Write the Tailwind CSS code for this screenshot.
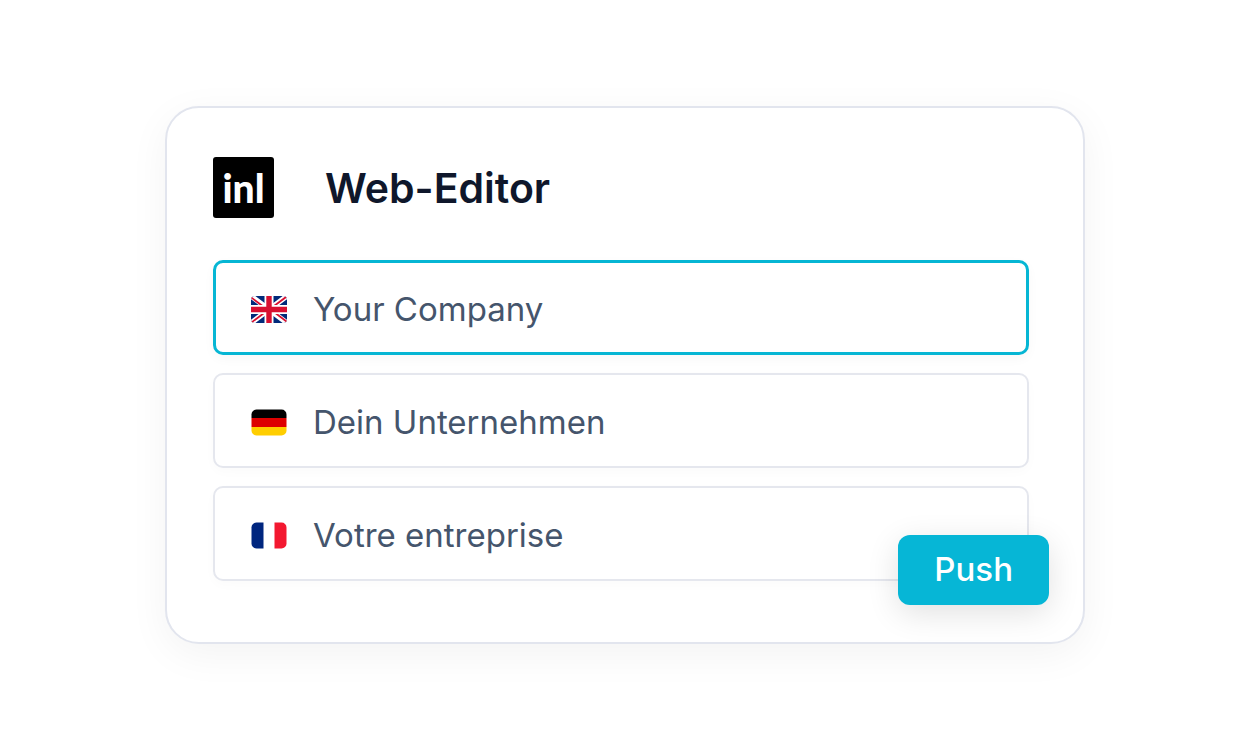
<!DOCTYPE html>
<html lang="en">
<head>
<meta charset="utf-8">
<meta name="viewport" content="width=device-width, initial-scale=1">
<title>Web-Editor</title>
<script src="https://cdn.jsdelivr.net/npm/@tailwindcss/browser@4"></script>
</head>
<body class="flex min-h-screen items-center justify-center bg-white font-['Inter',sans-serif]">
<main class="relative w-full max-w-[920px] rounded-[34px] border-2 border-[#e2e5ee] bg-white pt-12 pr-[54px] pb-[61px] pl-[46px] shadow-[0_10px_40px_rgba(0,0,0,0.05)]">
  <header class="flex items-center gap-[51px]">
    <div class="flex size-[61px] items-center justify-center rounded-[3px] bg-black pt-0.5 font-['Lato',sans-serif] text-[39px] font-black text-white">inl</div>
    <h1 class="pt-0.5 text-[41px] leading-[61px] font-semibold text-slate-900">Web-Editor</h1>
  </header>
  <form class="mt-[41px] flex flex-col gap-[18px]">
    <label class="flex h-[95px] items-center gap-[26px] rounded-[10px] border-[3px] border-[#06b6d4] bg-white pt-[3px] pr-6 pl-[35px] shadow-[0_4px_12px_rgba(0,0,0,0.03)]">
      <svg class="h-[27px] w-9 shrink-0" viewBox="0 0 36 27" role="img" aria-label="English">
        <clipPath id="uk"><rect width="36" height="27" rx="4"/></clipPath>
        <g clip-path="url(#uk)">
          <path fill="#012a7a" d="M0 0h36v27H0z"/>
          <path stroke="#fff" stroke-width="5.2" d="M0 0l36 27M36 0L0 27"/>
          <path stroke="#d80f30" stroke-width="1.8" d="M-1 .5L17 14M19 13l18 13.5M37-.5L19 13M17 14L-1 27.500"/>
          <path stroke="#fff" stroke-width="9" d="M18 0v27M0 13.500h36"/>
          <path stroke="#d80f30" stroke-width="5.400" d="M18 0v27M0 13.500h36"/>
        </g>
      </svg>
      <input type="text" aria-label="English" value="Your Company" class="h-14 min-w-0 flex-1 bg-transparent text-[33px] text-slate-600 outline-none">
    </label>
    <label class="flex h-[95px] items-center gap-[26px] rounded-[10px] border-2 border-[#e5e7ee] bg-white pt-[3px] pr-6 pl-9 shadow-[0_4px_12px_rgba(0,0,0,0.02)]">
      <svg class="h-[27px] w-9 shrink-0" viewBox="0 0 36 27" role="img" aria-label="German">
        <clipPath id="de"><rect x=".5" y=".5" width="35" height="26" rx="5"/></clipPath>
        <g clip-path="url(#de)">
          <path d="M0 0h36v9H0z"/><path fill="#d00" d="M0 9h36v9H0z"/><path fill="#ffce00" d="M0 18h36v9H0z"/>
        </g>
      </svg>
      <input type="text" aria-label="German" value="Dein Unternehmen" class="h-14 min-w-0 flex-1 bg-transparent text-[33px] text-slate-600 outline-none">
    </label>
    <label class="flex h-[95px] items-center gap-[26px] rounded-[10px] border-2 border-[#e5e7ee] bg-white pt-[3px] pr-6 pl-9 shadow-[0_4px_12px_rgba(0,0,0,0.02)]">
      <svg class="h-[27px] w-9 shrink-0" viewBox="0 0 36 27" role="img" aria-label="French">
        <clipPath id="fr"><rect x=".5" y=".5" width="35" height="26" rx="5"/></clipPath>
        <g clip-path="url(#fr)">
          <path fill="#fff" d="M0 0h36v27H0z"/><path fill="#00267f" d="M0 0h12.500v27H0z"/><path fill="#f31830" d="M23.500 0H36v27H23.500z"/>
        </g>
      </svg>
      <input type="text" aria-label="French" value="Votre entreprise" class="h-14 min-w-0 flex-1 bg-transparent text-[33px] text-slate-600 outline-none">
    </label>
    <button type="button" class="absolute right-[34px] bottom-[37px] h-[70px] rounded-xl bg-[#06b6d6] px-9 text-[33px] font-medium text-white shadow-[0_8px_32px_rgba(0,0,0,0.12)]">Push</button>
  </form>
</main>
</body>
</html>
